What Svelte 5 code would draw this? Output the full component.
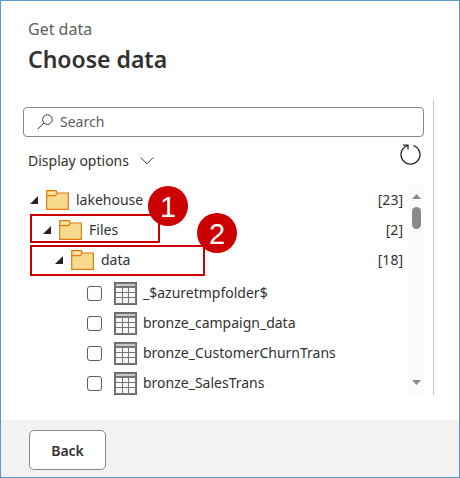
<script>
  const folders = [
    { name: 'lakehouse', count: 23, level: 0, mark: null },
    { name: 'Files', count: 2, level: 1, mark: 1 },
    { name: 'data', count: 18, level: 2, mark: 2 }
  ];
  const tables = [
    '_$azuretmpfolder$',
    'bronze_campaign_data',
    'bronze_CustomerChurnTrans',
    'bronze_SalesTrans'
  ];
</script>

<main class="dialog">
  <header>
    <p class="crumb">Get data</p>
    <h1>Choose data</h1>
  </header>

  <section class="panel">
    <label class="search">
      <svg width="16" height="16" viewBox="0 0 16 16" fill="none" stroke="#3b3a39" aria-hidden="true">
        <circle cx="10.4" cy="5.6" r="4.8" />
        <path d="M7 9 L.6 15.2" />
      </svg>
      <input type="text" placeholder="Search" aria-label="Search" />
    </label>

    <div class="toolbar">
      <button class="options">
        Display options
        <svg width="14" height="9" viewBox="0 0 14 9" fill="none" stroke="#3b3a39" aria-hidden="true">
          <path d="M.8 1.5 L7 7.9 L13.2 1.5" />
        </svg>
      </button>
      <button class="refresh" aria-label="Refresh">
        <svg width="22" height="22" viewBox="0 0 22 22" fill="none" stroke="#252423" stroke-width="1.3" aria-hidden="true">
          <path d="M13.4 1.6 A9.5 9.5 0 1 1 7.6 1.6" />
          <path d="M3 1.2 H8 V5.6" />
        </svg>
      </button>
    </div>

    <div class="listing">
      <div class="tree">
        {#each folders as f}
          <div class="row folder level{f.level}">
            <svg class="caret" width="8" height="8" viewBox="0 0 8 8" aria-hidden="true">
              <path d="M8 0 V8 H0 Z" fill="#252423" />
            </svg>
            <svg class="icon" width="23" height="20" viewBox="0 0 23 20" fill="#f8da8f" stroke="#e07b10" stroke-width="1.2" aria-hidden="true">
              <path d="M.7 19.3 V.7 H10 L11.5 3 H22.3 V19.3 Z" />
              <path d="M.7 5.6 H9.5 L11.5 3" fill="none" />
              <path d="M2.6 2.9 H9" stroke="#fff2c4" stroke-width="1" />
            </svg>
            <span class="name">{f.name}</span>
            <span class="count">[{f.count}]</span>
            {#if f.mark}
              <div class="mark mark{f.mark}"><span class="badge">{f.mark}</span></div>
            {/if}
          </div>
        {/each}

        <div class="tables">
          {#each tables as t}
            <label class="row table">
              <input type="checkbox" />
              <svg width="23" height="23" viewBox="0 0 23 23" aria-hidden="true">
                <rect x=".5" y=".5" width="22" height="22" fill="#f7f7f7" stroke="#6b6967" />
                <rect x="1" y="1" width="21" height="5" fill="#777" />
                <rect x="2" y="2" width="19" height="2" fill="#c8c8c8" />
                <path d="M1 10.5 H22 M1 15.5 H22 M8.5 6 V22 M14.5 6 V22" stroke="#777" fill="none" />
                <path d="M1.5 6 V21.5 H21.5 V6" stroke="#777" fill="none" />
              </svg>
              <span>{t}</span>
            </label>
          {/each}
        </div>
      </div>

      <div class="scrollbar" aria-hidden="true">
        <svg width="9" height="5" viewBox="0 0 9 5"><path d="M4.5 0 L9 5 H0 Z" fill="#8a8a8a" /></svg>
        <span class="thumb"></span>
        <svg class="down" width="9" height="5" viewBox="0 0 9 5"><path d="M0 0 H9 L4.5 5 Z" fill="#8a8a8a" /></svg>
      </div>
    </div>
  </section>

  <footer>
    <button class="back">Back</button>
  </footer>
</main>

<style>
  .dialog {
    box-sizing: border-box;
    min-height: 100vh;
    display: flex;
    flex-direction: column;
    border: 1px solid #5b9bc8;
    background: #fff;
    color: #323130;
    font: 14px/20px "Noto Sans", "Open Sans", sans-serif;
  }
  header { padding: 18px 27px 0; }
  p, h1 { margin: 0; }
  .crumb { font-size: 16px; line-height: 20px; color: #605e5c; }
  h1 { font-size: 23px; line-height: 32px; font-weight: 600; color: #323130; margin-top: 4px; }
  .panel {
    margin: 25px 25px 0 22px;
    padding: 7px 9px 0 0;
    border-right: 1px solid #c8c6c4;
  }
  .search {
    box-sizing: border-box;
    height: 30px;
    display: flex;
    align-items: center;
    gap: 7px;
    padding: 0 13px;
    border: 1px solid #8a8886;
    border-radius: 4px;
  }
  .search input {
    flex: 1;
    min-width: 0;
    padding: 0;
    border: 0;
    outline: 0;
    background: none;
    font: inherit;
    color: inherit;
  }
  .search input::placeholder { color: #605e5c; opacity: 1; }
  button { font: inherit; color: inherit; }
  .toolbar {
    height: 47px;
    display: flex;
    justify-content: space-between;
    align-items: center;
    padding: 0 2px 0 5px;
  }
  .options, .refresh { display: flex; align-items: center; padding: 0; border: 0; background: none; }
  .options { gap: 11px; }
  .refresh { padding-bottom: 12px; }
  .listing { display: flex; height: 211px; overflow: hidden; }
  .tree { flex: 1; min-width: 0; padding-top: 1px; }
  .row { display: flex; align-items: center; height: 30px; }
  .folder { position: relative; padding-right: 6px; }
  .level0 { padding-left: 7px; }
  .level1 { padding-left: 20px; }
  .level2 { padding-left: 32px; }
  .icon { margin: 0 7px 0 8px; }
  .count { margin-left: auto; }
  .tables { padding-top: 3px; }
  .table { padding-left: 64px; }
  .table input {
    appearance: none;
    box-sizing: border-box;
    width: 15px;
    height: 15px;
    margin: 0 12px 0 0;
    border: 1px solid #605e5c;
    border-radius: 3px;
    background: #fff;
  }
  .table svg { margin-right: 6px; }
  .mark {
    position: absolute;
    left: 7px;
    box-sizing: border-box;
    border: 2px solid #c00;
    pointer-events: none;
  }
  .mark1 { top: -1px; width: 130px; height: 29px; }
  .mark2 { top: 0; width: 175px; height: 31px; }
  .badge {
    position: absolute;
    z-index: 1;
    width: 40px;
    height: 40px;
    border-radius: 50%;
    background: #c00;
    color: #fff;
    font: 29px/42px "Liberation Sans", Arial, sans-serif;
    text-align: center;
  }
  .mark1 .badge { top: -30px; right: -30px; }
  .mark2 .badge { top: -34px; right: -34px; }
  .scrollbar {
    box-sizing: border-box;
    width: 15px;
    padding: 10px 0;
    display: flex;
    flex-direction: column;
    align-items: center;
    gap: 8px;
    background: #fbfbfb;
  }
  .thumb { width: 9px; height: 22px; border-radius: 5px; background: #8a8a8a; }
  .down { margin-top: auto; }
  footer {
    margin-top: auto;
    padding: 10px 28px 7px;
    background: #f3f2f1;
  }
  .back {
    height: 40px;
    width: 77px;
    padding: 2px 0 0;
    border: 1px solid #8a8886;
    border-radius: 5px;
    background: #fff;
    font-weight: 600;
  }
</style>
